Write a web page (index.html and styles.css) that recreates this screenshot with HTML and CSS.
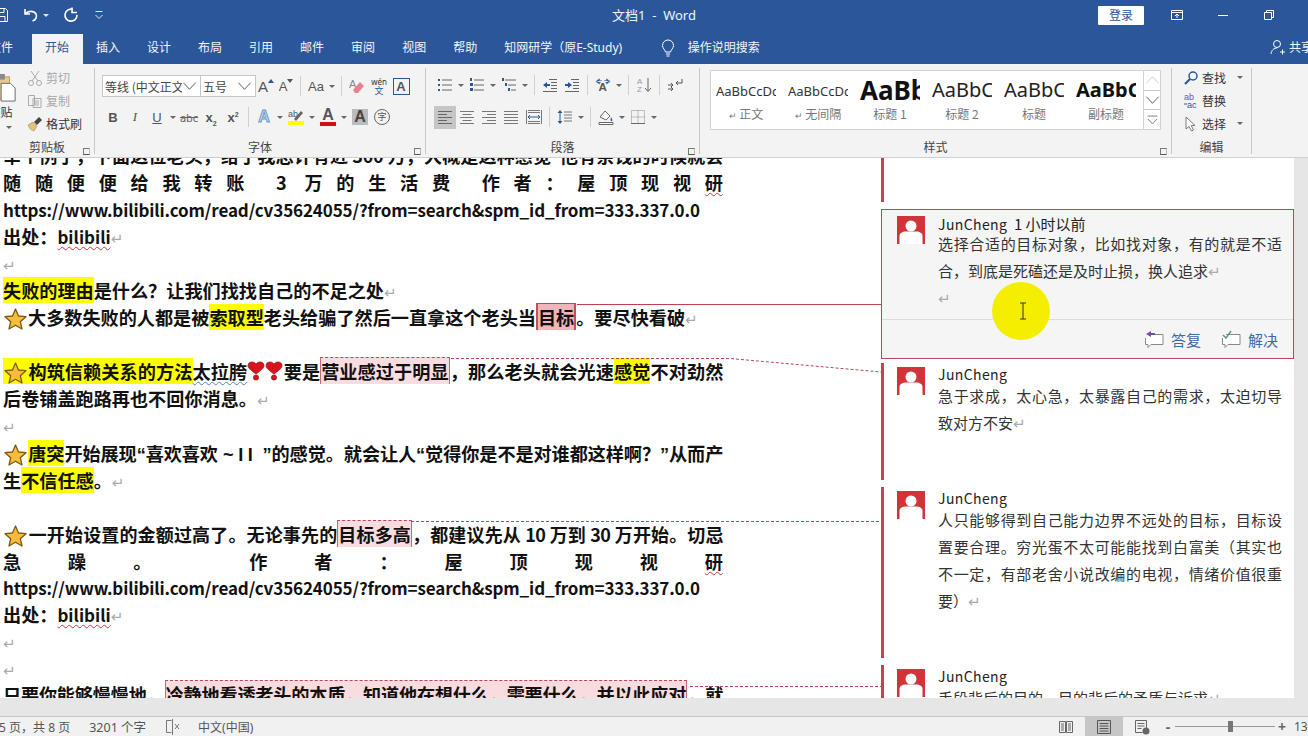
FILE: index.html
```html
<!DOCTYPE html>
<html lang="zh-CN">
<head>
    <meta charset="utf-8">
    <title>文档1 - Word</title>
    <link rel="stylesheet" href="styles.css">
</head>
<body>
<div class="app">
    <!-- title bar -->
    <div class="titlebar">
        <div class="qat">
            <svg class="qat-save" viewBox="0 0 14 14"><path d="M.5.5h11l2 2v11H.5zM3 .5v4h7v-4M3 13.5v-5h8v5" fill="none" stroke="#fff"/></svg>
            <svg class="ic" viewBox="0 0 16 16"><path d="M2 2v5h5M2.500 7C5 3.500 11 3.500 13 7c1.500 3-.5 6-3.500 7" fill="none" stroke="#fff" stroke-width="1.600"/></svg>
            <i class="tri tri-w"></i>
            <svg class="ic redo" viewBox="0 0 16 16"><path d="M10 2.500A6 6 0 1 0 14 8M9 .500v5h5" fill="none" stroke="#fff" stroke-width="1.600"/></svg>
            <svg class="custom" viewBox="0 0 10 10"><path d="M1.500 1.500h7M1.500 5l3.500 3.500L8.500 5" fill="none" stroke="#dfe7f3"/></svg>
        </div>
        <div class="doc-title">文档1 &nbsp;-&nbsp; Word</div>
        <div class="winctl">
            <div class="login">登录</div>
            <div class="winbtn"><svg class="ic" viewBox="0 0 16 16"><path d="M2.500 3.500h11v9h-11zM2.500 5.500h11M8 11V7M6 9l2-2 2 2" fill="none" stroke="#fff"/></svg></div>
            <div class="winbtn"><svg class="ic" viewBox="0 0 16 16"><path d="M3 8.500h10" stroke="#fff"/></svg></div>
            <div class="winbtn"><svg class="ic" viewBox="0 0 16 16"><path d="M3.500 5.500h7v7h-7zM5.500 5.500v-2h7v7h-2" fill="none" stroke="#fff"/></svg></div>
        </div>
    </div>

    <!-- tabs -->
    <div class="tabs">
        <div class="tab tab-file">文件</div>
        <div class="tab active">开始</div>
        <div class="tab">插入</div>
        <div class="tab">设计</div>
        <div class="tab">布局</div>
        <div class="tab">引用</div>
        <div class="tab">邮件</div>
        <div class="tab">审阅</div>
        <div class="tab">视图</div>
        <div class="tab">帮助</div>
        <div class="tab">知网研学（原E-Study)</div>
        <svg class="bulb" viewBox="0 0 16 18"><path d="M5.500 13C5 10.500 2.500 9.500 2.500 6.500a5.500 5.500 0 0 1 11 0c0 3-2.500 4-3 6.500zM6 15h4M6.500 17h3" fill="none" stroke="#fff"/></svg>
        <div class="tab-search">操作说明搜索</div>
        <div class="share">
            <svg class="ic" viewBox="0 0 16 16"><circle cx="7" cy="5" r="3.500" fill="none" stroke="#fff"/><path d="M1 15c.5-4 3-6 6-6M10 13h5M12.500 10.500v5" fill="none" stroke="#fff"/></svg>
            <span>共享</span>
        </div>
    </div>

    <!-- ribbon -->
    <div class="ribbon">
        <section class="group g-clip">
            <div class="g-body clip-body">
                <div class="paste">
                    <svg class="paste-ic" viewBox="0 0 30 32"><path d="M2 4h20v24H2z" fill="#e6c98d" stroke="#b89a62"/><path d="M7 1h10v6H7z" fill="#8a8a8a"/><path d="M13 11h10l5 5v14H13z" fill="#fff" stroke="#666"/></svg>
                    <span>粘贴</span>
                    <i class="tri"></i>
                </div>
                <div class="clip-list">
                    <div class="clip-row off"><svg class="ic" viewBox="0 0 16 16"><path d="M4 1l7 10M12 1L5 11" stroke="#aaa" fill="none"/><circle cx="4" cy="13" r="2.500" fill="none" stroke="#aaa"/><circle cx="12" cy="13" r="2.500" fill="none" stroke="#aaa"/></svg>剪切</div>
                    <div class="clip-row off"><svg class="ic" viewBox="0 0 16 16"><path d="M1.500 2.500h6v10h-6zM6 5.500h8v9H6zM8 8h4M8 10h4M8 12h4" fill="#f3f3f3" stroke="#aaa"/></svg>复制</div>
                    <div class="clip-row"><svg class="ic" viewBox="0 0 16 16"><path d="M1 9l5-3 4 4-3 5c-2 0-5-3-6-6z" fill="#e2c27c" stroke="#a98c50" stroke-width=".6"/><path d="M7 6l5-5 3 3-5 5z" fill="#444"/></svg>格式刷</div>
                </div>
            </div>
            <div class="g-label">剪贴板</div>
            <i class="launch"></i>
        </section>

        <section class="group g-font">
            <div class="g-body">
                <div class="t-row font-top">
                    <div class="combo combo-font"><span>等线 (中文正文)</span><svg class="chev" viewBox="0 0 16 10"><path d="M1.500 1.500L8 8.500l6.500-7" fill="none" stroke="#555"/></svg></div>
                    <div class="combo combo-size"><span>五号</span><svg class="chev" viewBox="0 0 16 10"><path d="M1.500 1.500L8 8.500l6.500-7" fill="none" stroke="#555"/></svg></div>
                    <div class="tool w20"><b class="ga">A</b><svg class="mini" viewBox="0 0 6 4"><path d="M3 0l3 4H0z" fill="#2b579a"/></svg></div>
                    <div class="tool w20"><b class="ga ga-s">A</b><svg class="mini" viewBox="0 0 6 4"><path d="M3 4l3-4H0z" fill="#555"/></svg></div>
                    <i class="sep"></i>
                    <div class="tool d"><span class="aa">Aa</span><i class="tri"></i></div>
                    <i class="sep"></i>
                    <div class="tool"><svg class="ic" viewBox="0 0 16 16"><text x="0" y="10" font-size="11" fill="#888" font-family="Liberation Sans">A</text><path d="M4 12l7-8 4 4-6 7H6z" fill="#e8808f"/></svg></div>
                    <div class="tool wen"><span>wén</span><span>文</span></div>
                    <div class="tool"><span class="a-box">A</span></div>
                </div>
                <div class="t-row font-bot">
                    <div class="tool"><b class="fmt">B</b></div>
                    <div class="tool"><i class="fmt fmt-i">I</i></div>
                    <div class="tool d"><u class="fmt">U</u><i class="tri"></i></div>
                    <div class="tool"><span class="abc">abc</span></div>
                    <div class="tool"><b class="fmt">x<sub>2</sub></b></div>
                    <div class="tool"><b class="fmt">x<sup>2</sup></b></div>
                    <i class="sep"></i>
                    <div class="tool d"><span class="a-glow">A</span><i class="tri"></i></div>
                    <div class="tool d"><svg class="ic" viewBox="0 0 16 16"><text x="0" y="8" font-size="9" fill="#555" font-family="Liberation Sans">ab</text><path d="M6 10l7-8 2 2-7 8z" fill="#666"/><path d="M0 12h16v4H0z" fill="#ff0"/></svg><i class="tri"></i></div>
                    <div class="tool d"><span class="a-color">A</span><i class="tri"></i></div>
                    <div class="tool"><span class="a-gray">A</span></div>
                    <div class="tool"><span class="a-circ">字</span></div>
                </div>
            </div>
            <div class="g-label">字体</div>
            <i class="launch"></i>
        </section>

        <section class="group g-para">
            <div class="g-body">
                <div class="t-row para-top">
                    <div class="tool d"><svg class="ic" viewBox="0 0 16 16"><path d="M5 3h10M5 8h10M5 13h10" stroke="#666"/><path d="M1 2h2v2H1zM1 7h2v2H1zM1 12h2v2H1z" fill="#2b579a"/></svg><i class="tri"></i></div>
                    <div class="tool d"><svg class="ic" viewBox="0 0 16 16"><path d="M5 3h10M5 8h10M5 13h10" stroke="#666"/><path d="M1 1h2v3H1zM1 6h3v3H1zM1 11h3v3H1z" fill="#2b579a"/></svg><i class="tri"></i></div>
                    <div class="tool d"><svg class="ic" viewBox="0 0 16 16"><path d="M4 3h11M7 8h8M10 13h5" stroke="#666"/><path d="M1 1h2v3H1zM4 6h2v3H4zM7 11h2v3H7z" fill="#2b579a"/></svg><i class="tri"></i></div>
                    <i class="sep"></i>
                    <div class="tool"><svg class="ic" viewBox="0 0 16 16"><path d="M7 2.500h8M9 5.500h6M9 8.500h6M9 11.500h6M1 14.500h14" stroke="#666"/><path d="M1 8l4-3v2h3v2H5v2z" fill="#2b579a"/></svg></div>
                    <div class="tool"><svg class="ic" viewBox="0 0 16 16"><path d="M7 2.500h8M9 5.500h6M9 8.500h6M9 11.500h6M1 14.500h14" stroke="#666"/><path d="M8 8L4 5v2H1v2h3v2z" fill="#2b579a"/></svg></div>
                    <i class="sep"></i>
                    <div class="tool d"><svg class="ic" viewBox="0 0 18 16"><text x="4" y="15" font-size="13" font-weight="700" fill="#555" font-family="Liberation Sans">A</text><path d="M1 4l4-3v2h3M17 4l-4-3v2h-3M1 4l4 3V5h2M17 4l-4 3V5h-2" fill="#2b579a" stroke="#2b579a" stroke-width=".5"/></svg><i class="tri"></i></div>
                    <i class="sep"></i>
                    <div class="tool"><svg class="ic" viewBox="0 0 16 16"><text x="1" y="7" font-size="8" fill="#999" font-family="Liberation Sans">A</text><text x="1" y="15" font-size="8" fill="#999" font-family="Liberation Sans">Z</text><path d="M12 1v13M9 11l3 3.500 3-3.500" fill="none" stroke="#666"/></svg></div>
                    <i class="sep"></i>
                    <div class="tool"><svg class="ic" viewBox="0 0 16 16"><path d="M15 2v4H9M11 4L9 6l2 2M1 8h5M4 6l2 2-2 2M1 12h5M4 10l2 2-2 2" fill="none" stroke="#555"/></svg></div>
                </div>
                <div class="t-row para-bot">
                    <div class="tool on"><svg class="ic" viewBox="0 0 16 16"><path d="M1 2.500h14M1 5.500h9M1 8.500h14M1 11.500h9M1 14.500h14" stroke="#666"/></svg></div>
                    <div class="tool"><svg class="ic" viewBox="0 0 16 16"><path d="M1 2.500h14M3.500 5.500h9M1 8.500h14M3.500 11.500h9M1 14.500h14" stroke="#777"/></svg></div>
                    <div class="tool"><svg class="ic" viewBox="0 0 16 16"><path d="M1 2.500h14M6 5.500h9M1 8.500h14M6 11.500h9M1 14.500h14" stroke="#777"/></svg></div>
                    <div class="tool"><svg class="ic" viewBox="0 0 16 16"><path d="M1 2.500h14M1 5.500h14M1 8.500h14M1 11.500h14M1 14.500h14" stroke="#777"/></svg></div>
                    <div class="tool dist"><svg class="ic" viewBox="0 0 16 16"><path d="M.5 1v14M15.500 1v14M2 1.500h12M2 3.500h12M2 12.500h12M2 14.500h12" stroke="#777"/><path d="M2 8h12M4 6L2 8l2 2M12 6l2 2-2 2" fill="none" stroke="#2b579a"/></svg></div>
                    <i class="sep"></i>
                    <div class="tool d"><svg class="ic" viewBox="0 0 16 16"><path d="M7 3h8M7 6h8M7 9h8M7 12h8" stroke="#777"/><path d="M3 1l2.500 3h-5zM3 15L.5 12h5z" fill="#2b579a"/><path d="M3 3v10" stroke="#2b579a"/></svg><i class="tri"></i></div>
                    <i class="sep"></i>
                    <div class="tool d"><svg class="ic" viewBox="0 0 16 16"><path d="M2 8l5-6 5 5-4 4z" fill="#fff" stroke="#666"/><path d="M13 8c1 2 2 3 1 4s-2-1-1-4z" fill="#2b579a"/><path d="M1 13.500h14v2H1z" fill="#fff" stroke="#666"/></svg><i class="tri"></i></div>
                    <div class="tool d"><svg class="ic" viewBox="0 0 16 16"><path d="M1.500 1.500h13v13h-13zM8 1.500v13M1.500 8h13" fill="none" stroke="#888" stroke-dasharray="1 1"/><path d="M1 14.500h14" stroke="#666"/></svg><i class="tri"></i></div>
                </div>
            </div>
            <div class="g-label">段落</div>
            <i class="launch"></i>
        </section>

        <section class="group g-style">
            <div class="style-box">
                <div class="style-item"><div class="pv">AaBbCcDd</div><div class="lb"><em>↵</em> 正文</div></div>
                <div class="style-item"><div class="pv">AaBbCcDd</div><div class="lb"><em>↵</em> 无间隔</div></div>
                <div class="style-item"><div class="pv pv-h1">AaBbC</div><div class="lb">标题 1</div></div>
                <div class="style-item"><div class="pv pv-h2">AaBbCc</div><div class="lb">标题 2</div></div>
                <div class="style-item"><div class="pv pv-h2">AaBbCc</div><div class="lb">标题</div></div>
                <div class="style-item style-last"><div class="pv pv-h3">AaBbCc</div><div class="lb">副标题</div></div>
                <div class="style-scroll">
                    <div><svg class="chev" viewBox="0 0 16 10"><path d="M1.500 8.500L8 1.500l6.500 7" fill="none" stroke="#ccc"/></svg></div>
                    <div><svg class="chev" viewBox="0 0 16 10"><path d="M1.500 1.500L8 8.500l6.500-7" fill="none" stroke="#555"/></svg></div>
                    <div><svg class="chev" viewBox="0 0 16 14"><path d="M1 1.500h14M1.500 5.500L8 12.500l6.500-7" fill="none" stroke="#555"/></svg></div>
                </div>
            </div>
            <div class="g-label">样式</div>
            <i class="launch"></i>
        </section>

        <section class="group g-edit">
            <div class="g-body edit-list">
                <div class="edit-row"><svg class="ic" viewBox="0 0 16 16"><circle cx="10" cy="6" r="4" fill="none" stroke="#2b579a" stroke-width="1.500"/><path d="M7 9l-5 5" stroke="#2b579a" stroke-width="2.200"/></svg>查找<i class="tri"></i></div>
                <div class="edit-row"><svg class="ic" viewBox="0 0 16 16"><text x="1" y="7" font-size="9" fill="#7b4fa0" font-family="Liberation Sans">ab</text><text x="4" y="15" font-size="9" fill="#2b579a" font-family="Liberation Sans">ac</text><path d="M1 11h3" stroke="#2b579a"/></svg>替换</div>
                <div class="edit-row"><svg class="ic" viewBox="0 0 16 16"><path d="M3 1v12l3-2.500L8.500 15l2-1-2.300-4.500H12z" fill="#fff" stroke="#777"/></svg>选择<i class="tri"></i></div>
            </div>
            <div class="g-label">编辑</div>
        </section>
    </div>

    <!-- document + markup area -->
    <div class="main">
        <div class="sheet">
            <div class="doc">
                <p class="ln fit squeeze">举个例子，下面这位老头，给了我总计有近 300 万，大概是这种感觉<span class="q">"</span>他有余钱的时候就会</p>
                <p class="ln fit">随随便便给我转账 3 万的生活费 作者：屋顶现视<span class="wave">研</span></p>
                <p class="ln url">https://www.bilibili.com/read/cv35624055/?from=search&amp;spm_id_from=333.337.0.0</p>
                <p class="ln">出处：<span class="wave lat">bilibili</span><em class="para">↵</em></p>
                <p class="ln"><em class="para">↵</em></p>
                <p class="ln"><mark>失败的理由</mark>是什么？让我们找找自己的不足之处<em class="para">↵</em></p>
                <p class="ln"><svg class="star" viewBox="0 0 24 24"><use href="#star"/></svg>大多数失败的人都是被<mark>索取型</mark>老头给骗了然后一直拿这个老头当<span class="cmt cmt-on">目标</span>。要尽快看破<em class="para">↵</em></p>
                <p class="ln"></p>
                <p class="ln fit squeeze"><mark><svg class="star" viewBox="0 0 24 24"><use href="#star"/></svg>构筑信赖关系的方法</mark><span class="wave-b">太拉胯</span><svg class="heart" viewBox="0 0 18 20"><use href="#heart"/></svg><svg class="heart" viewBox="0 0 18 20"><use href="#heart"/></svg>要是<span class="cmt">营业感过于明显</span>，那么老头就会光速<mark>感觉</mark>不对劲然</p>
                <p class="ln">后卷铺盖跑路再也不回你消息。<em class="para">↵</em></p>
                <p class="ln"><em class="para">↵</em></p>
                <p class="ln fit squeeze"><svg class="star" viewBox="0 0 24 24"><use href="#star"/></svg><mark>唐突</mark>开始展现<span class="q">“</span>喜欢喜欢<span class="q"> ~ I I  ”</span>的感觉。就会让人<span class="q">“</span>觉得你是不是对谁都这样啊？<span class="q">”</span>从而产</p>
                <p class="ln">生<mark>不信任感</mark>。<em class="para">↵</em></p>
                <p class="ln"></p>
                <p class="ln fit squeeze-more"><svg class="star" viewBox="0 0 24 24"><use href="#star"/></svg>一开始设置的金额过高了。无论事先的<span class="cmt">目标多高</span>，都建议先从 10 万到 30 万开始。切忌</p>
                <p class="ln fit">急躁。 作者：屋顶现视<span class="wave">研</span></p>
                <p class="ln ln-t url">https://www.bilibili.com/read/cv35624055/?from=search&amp;spm_id_from=333.337.0.0</p>
                <p class="ln ln-t">出处：<span class="wave lat">bilibili</span><em class="para">↵</em></p>
                <p class="ln ln-t"><em class="para">↵</em></p>
                <p class="ln ln-t"><em class="para">↵</em></p>
                <p class="ln ln-t fit squeeze">只要你能够慢慢地，<span class="cmt">冷静地看透老头的本质，知道他在想什么，需要什么，并以此应对</span>，就</p>
            </div>

            <div class="markup">
                <div class="comment c-prev"></div>
                <div class="comment c-active">
                    <div class="c-main">
                        <svg class="avatar" viewBox="0 0 28 28"><use href="#avatar"/></svg>
                        <div class="c-text">
                            <div class="c-name">JunCheng <span>1 小时以前</span></div>
                            <div class="c-body">选择合适的目标对象，比如找对象，有的就是不适合，到底是死磕还是及时止损，换人追求<em class="para">↵</em><br><em class="para">↵</em></div>
                        </div>
                    </div>
                    <div class="c-foot">
                        <svg class="foot-ic" viewBox="0 0 20 18"><path d="M5 4.500h14v10H7l-3 3v-3H1.500V8" fill="#fff" stroke="#888"/><path d="M7 1L2 4l5 3V5h4V3H7z" fill="#7a4ea8"/></svg>
                        <span>答复</span>
                        <svg class="foot-ic" viewBox="0 0 20 18"><path d="M5 4.500h14v10H7l-3 3v-3H1.500V8" fill="#fff" stroke="#888"/><path d="M2 5l3 3 5-7" fill="none" stroke="#5c9e7a" stroke-width="1.500"/></svg>
                        <span>解决</span>
                    </div>
                </div>
                <div class="comment c-2">
                    <div class="c-main">
                        <svg class="avatar" viewBox="0 0 28 28"><use href="#avatar"/></svg>
                        <div class="c-text">
                            <div class="c-name">JunCheng</div>
                            <div class="c-body">急于求成，太心急，太暴露自己的需求，太迫切导致对方不安<em class="para">↵</em></div>
                        </div>
                    </div>
                </div>
                <div class="comment c-3">
                    <div class="c-main">
                        <svg class="avatar" viewBox="0 0 28 28"><use href="#avatar"/></svg>
                        <div class="c-text">
                            <div class="c-name">JunCheng</div>
                            <div class="c-body">人只能够得到自己能力边界不远处的目标，目标设置要合理。穷光蛋不太可能能找到白富美（其实也不一定，有部老舍小说改编的电视，情绪价值很重要）<em class="para">↵</em></div>
                        </div>
                    </div>
                </div>
                <div class="comment c-4">
                    <div class="c-main">
                        <svg class="avatar" viewBox="0 0 28 28"><use href="#avatar"/></svg>
                        <div class="c-text">
                            <div class="c-name">JunCheng</div>
                            <div class="c-body">手段背后的目的，目的背后的矛盾与诉求<em class="para">↵</em></div>
                        </div>
                    </div>
                </div>
            </div>
        </div>

        <!-- comment connector lines, over the page -->
        <svg class="links" viewBox="0 0 1308 540">
            <path d="M577 146.500H881" stroke="#c0404f" fill="none"/>
            <path d="M451 200.500H730L881 214M411 363.500H881M690 528.500H881" stroke="#b5485a" stroke-dasharray="3 2" fill="none"/>
        </svg>

        <div class="spot"><svg viewBox="0 0 10 18"><path d="M2 1h6M2 17h6M5 1v16" fill="none" stroke="#333"/></svg></div>
    </div>

    <!-- status bar -->
    <div class="status">
        <span class="st-page">第 5 页，共 8 页</span>
        <span class="st-words">3201 个字</span>
        <svg class="st-book" viewBox="0 0 16 16"><path d="M7.500 1.500h-5v12h5M8.500 0v16" fill="none" stroke="#777"/><path d="M11 5l4 5M15 5l-4 5" stroke="#777"/></svg>
        <span class="st-lang">中文(中国)</span>
        <div class="st-right">
            <div class="view"><svg class="ic" viewBox="0 0 16 16"><path d="M1.500 2.500h6v11h-6zM8.500 2.500h6v11h-6zM3 5h3M3 7h3M3 9h3M3 11h3M10 5h3M10 7h3M10 9h3M10 11h3" fill="none" stroke="#666"/></svg></div>
            <div class="view on"><svg class="ic" viewBox="0 0 16 16"><path d="M1.500 1.500h13v13h-13zM3.500 4.500h9M3.500 7h9M3.500 9.500h9M3.500 12h9" fill="none" stroke="#555"/></svg></div>
            <div class="view"><svg class="ic" viewBox="0 0 16 16"><path d="M1.500 1.500h11v9M1.500 1.500v12h7M3.500 4.500h7M3.500 7h7M3.500 9.500h4" fill="none" stroke="#666"/><circle cx="12" cy="12" r="3.500" fill="#666"/></svg></div>
            <div class="zoom">
                <span class="z-sign">-</span>
                <div class="z-track"><i></i></div>
                <span class="z-sign">+</span>
                <span class="z-val">130%</span>
            </div>
        </div>
    </div>
</div>

<!-- shared drawings -->
<svg class="defs" aria-hidden="true">
    <symbol id="star" viewBox="0 0 24 24"><path d="M12 2l3 7 7.500.7-5.700 5 1.700 7.300L12 18.200 5.500 22l1.700-7.300-5.700-5L9 9z" fill="#f8bb3c" stroke="#7a5a12" stroke-width="1.300" stroke-linejoin="round"/></symbol>
    <symbol id="heart" viewBox="0 0 18 20"><path d="M9 13C5 10 1 7.500 1 4.500 1 2 3 1 5 1c2 0 3.300 1 4 2 .7-1 2-2 4-2 2 0 4 1 4 3.500C17 7.500 13 10 9 13z" fill="#d8141c" stroke="#8c1015" stroke-width=".7"/><circle cx="9" cy="16.500" r="2.600" fill="#d8141c" stroke="#8c1015" stroke-width=".7"/></symbol>
    <symbol id="avatar" viewBox="0 0 28 28"><path d="M0 0h28v28H0z" fill="#d13438"/><circle cx="14" cy="10" r="5.500" fill="#fff"/><path d="M2.500 28V20c0-3 3-4.500 6-4.500h11c3 0 6 1.500 6 4.500v8z" fill="#fff"/></symbol>
</svg>
</body>
</html>
```

FILE: styles.css
```css
* {
    box-sizing: border-box;
}

html, body {
    margin: 0;
    height: 100%;
    overflow: hidden;
}

body {
    font-family: "Noto Sans", "Noto Sans CJK SC", sans-serif;
    font-size: 12px;
    color: #444;
}

.app {
    width: 1308px;
    height: 736px;
    display: flex;
    flex-direction: column;
    overflow: hidden;
    background: #e6e6e6;
}

.ic {
    width: 16px;
    height: 16px;
    flex: none;
}

.tri {
    display: block;
    width: 0;
    height: 0;
    flex: none;
    border-left: 3px solid transparent;
    border-right: 3px solid transparent;
    border-top: 3px solid #666;
}

.tri-w {
    border-top-color: #dfe7f3;
}

.defs {
    position: absolute;
    width: 0;
    height: 0;
}

/* title bar */
.titlebar {
    height: 30px;
    flex: none;
    background: #2b579a;
    display: grid;
    grid-template-columns: 1fr auto 1fr;
    align-items: center;
    color: #fff;
}

.qat {
    display: flex;
    align-items: center;
    margin-left: -6px;
}

.qat-save {
    width: 14px;
    height: 14px;
    margin-right: 15px;
}

.qat .tri {
    margin-left: 4px;
}

.redo {
    margin-left: 14px;
}

.custom {
    width: 10px;
    height: 10px;
    margin-left: 15px;
}

.doc-title {
    font-size: 13px;
    color: #f0f3f8;
    margin-bottom: 2px;
}

.winctl {
    display: flex;
    align-items: center;
    justify-content: flex-end;
    margin-right: 16px;
}

.login {
    width: 46px;
    height: 19px;
    line-height: 19px;
    margin-right: 10px;
    text-align: center;
    background: #fff;
    color: #2b579a;
    border-radius: 1px;
}

.winbtn {
    width: 46px;
    display: flex;
    justify-content: center;
}

/* tabs */
.tabs {
    height: 34px;
    flex: none;
    background: #2b579a;
    display: flex;
    align-items: flex-end;
    color: #f3f5f9;
}

.tab {
    height: 30px;
    line-height: 28px;
    padding: 0 13.500px;
    flex: none;
}

.tab-file {
    margin-left: -24.500px;
    margin-right: 5px;
}

.tab.active {
    background: #f3f3f3;
    color: #2b579a;
}

.bulb {
    width: 16px;
    height: 18px;
    margin: 0 12px 7px 24px;
    flex: none;
}

.tab-search {
    height: 30px;
    line-height: 28px;
}

.share {
    margin-left: auto;
    margin-right: -8px;
    margin-bottom: 3px;
    height: 29px;
    width: 46px;
    display: flex;
    align-items: center;
    gap: 3px;
    flex: none;
    white-space: nowrap;
}

/* ribbon */
.ribbon {
    height: 94px;
    flex: none;
    background: #f3f3f3;
    border-bottom: 1px solid #d0d0d0;
    display: flex;
}

.group {
    position: relative;
    flex: none;
    height: 86px;
    border-right: 1px solid #c8c8c8;
    margin: 4px 0 0;
}

.g-body {
    height: 71px;
}

.g-label {
    position: absolute;
    left: 0;
    right: 0;
    top: 71px;
    text-align: center;
    font-family: "Noto Sans CJK SC", sans-serif;
    font-size: 12px;
    line-height: 16px;
    color: #444;
}

.launch {
    position: absolute;
    right: 4px;
    top: 80px;
    width: 7px;
    height: 7px;
    border-left: 1px solid #777;
    border-top: 1px solid #777;
    border-right: 1px solid #bbb;
    border-bottom: 1px solid #555;
}

.g-clip {
    width: 95px;
}

.g-font {
    width: 331px;
    padding-left: 7px;
}

.g-para {
    width: 274px;
    padding-left: 8px;
}

.g-style {
    width: 472px;
    padding-left: 10px;
}

.g-edit {
    width: 80px;
    padding-left: 11px;
}

.t-row {
    display: flex;
    align-items: center;
    height: 24px;
}

.font-top {
    margin-top: 6px;
}

.font-bot {
    margin-top: 7px;
}

.para-top {
    margin-top: 5px;
}

.para-bot {
    margin-top: 8px;
}

.tool {
    position: relative;
    width: 22px;
    height: 23px;
    flex: none;
    display: flex;
    align-items: center;
    justify-content: center;
}

.w20 {
    width: 20px;
}

.tool.d {
    width: 32px;
    justify-content: flex-start;
    padding-left: 3px;
    gap: 5px;
}

.tool.on {
    background: #c6c6c6;
}

.dist {
    margin-left: 1px;
}

.sep {
    display: block;
    width: 1px;
    height: 20px;
    margin: 0 4px;
    background: #d0d0d0;
    flex: none;
}

/* clipboard */
.clip-body {
    display: flex;
}

.paste {
    width: 27px;
    margin-left: -13px;
    margin-right: 13px;
    padding-top: 5px;
    display: flex;
    flex-direction: column;
    align-items: center;
    flex: none;
}

.paste-ic {
    width: 28px;
    height: 30px;
    flex: none;
    align-self: flex-start;
    margin-left: 2px;
}

.paste span {
    font-family: "Noto Sans CJK SC", sans-serif;
    line-height: 16px;
    margin-top: 1px;
    white-space: nowrap;
    color: #333;
}

.paste .tri {
    margin-top: 6px;
    margin-left: 16px;
}

.clip-list {
    margin-top: -2px;
}

.clip-row {
    height: 23px;
    display: flex;
    align-items: center;
    gap: 3px;
    color: #333;
    white-space: nowrap;
}

.clip-row.off {
    color: #a8a8a8;
}

/* font group */
.combo {
    height: 22px;
    background: #fff;
    border: 1px solid #c6c6c6;
    display: flex;
    align-items: center;
    justify-content: space-between;
    padding: 0 3px 0 2px;
    flex: none;
    overflow: hidden;
}

.combo span {
    white-space: nowrap;
    overflow: hidden;
    font-family: "Noto Sans CJK SC", sans-serif;
    font-size: 12px;
}

.combo-font {
    width: 99px;
}

.combo-size {
    width: 56px;
    margin-left: -1px;
}

.combo-font span {
    width: 78px;
}

.chev {
    width: 15px;
    height: 10px;
    flex: none;
}

.ga {
    font-family: "Liberation Sans", sans-serif;
    font-weight: 400;
    font-size: 15px;
    color: #555;
}

.ga-s {
    font-size: 13px;
}

.mini {
    width: 6px;
    height: 4px;
    margin-bottom: 10px;
}

.aa {
    font-size: 13px;
    width: 16px;
    color: #555;
    font-family: "Liberation Sans", sans-serif;
    white-space: nowrap;
}

.wen {
    flex-direction: column;
    line-height: 9px;
    font-size: 8px;
    color: #333;
}

.wen span + span {
    color: #2b579a;
    font-size: 9px;
    font-family: "Noto Sans CJK SC", sans-serif;
}

.a-box {
    width: 17px;
    height: 17px;
    text-align: center;
    border: 1px solid #2b579a;
    font: 700 13px/15px "Liberation Sans", sans-serif;
    color: #555;
}

.fmt {
    font-family: "Liberation Sans", sans-serif;
    font-size: 13px;
    width: 16px;
    text-align: center;
    color: #555;
}

.fmt-i {
    font-family: "Liberation Serif", serif;
}

.fmt sub, .fmt sup {
    font-size: 7px;
    line-height: 0;
}

.abc {
    font-size: 11px;
    color: #666;
    text-decoration: line-through;
}

.a-glow, .a-color, .a-gray {
    width: 16px;
    text-align: center;
    font: 700 16px/16px "Liberation Sans", sans-serif;
}

.a-glow {
    color: #cfe0f3;
    -webkit-text-stroke: 1px #6f96c8;
}

.a-color {
    color: #555;
    border-bottom: 4px solid #d01010;
    line-height: 14px;
}

.a-gray {
    color: #444;
    background: #bcbcbc;
}

.a-circ {
    width: 16px;
    height: 16px;
    border: 1px solid #666;
    border-radius: 50%;
    font: 9px/14px "Noto Sans CJK SC", sans-serif;
    text-align: center;
    color: #555;
}

/* styles gallery */
.style-box {
    width: 451px;
    height: 60px;
    margin-top: 2px;
    background: #fff;
    border: 1px solid #d2d2d2;
    display: flex;
    padding-left: 5px;
}

.style-item {
    width: 72px;
    flex: none;
}

.style-last {
    width: 66px;
}

.pv {
    width: 60px;
    height: 35px;
    line-height: 40px;
    overflow: hidden;
    white-space: nowrap;
    font-size: 13px;
    color: #333;
    font-family: "Noto Sans", sans-serif;
}

.pv-h1 {
    font-size: 26px;
    font-weight: 700;
    color: #111;
    line-height: 38px;
}

.pv-h2 {
    font-size: 20px;
    color: #222;
    line-height: 38px;
}

.pv-h3 {
    font-size: 20px;
    font-weight: 700;
    color: #111;
    line-height: 38px;
}

.lb {
    width: 60px;
    text-align: center;
    font-size: 12px;
    line-height: 16px;
    color: #777;
    font-family: "Noto Sans CJK SC", sans-serif;
}

.lb em {
    font-style: normal;
    font-size: 9px;
}

.style-scroll {
    width: 17px;
    margin-left: auto;
    border-left: 1px solid #d2d2d2;
    flex: none;
    display: flex;
    flex-direction: column;
}

.style-scroll div {
    flex: 1;
    display: flex;
    align-items: center;
    justify-content: center;
    border-bottom: 1px solid #c8c8c8;
}

.style-scroll div:last-child {
    border-bottom: 0;
}

/* edit group */
.edit-list {
    margin-top: -2px;
}

.edit-row {
    height: 23px;
    display: flex;
    align-items: center;
    gap: 3px;
    color: #333;
    white-space: nowrap;
    font-family: "Noto Sans CJK SC", sans-serif;
}

.edit-row .tri {
    margin-left: 8px;
}

/* page */
.main {
    position: relative;
    height: 540px;
    flex: none;
    overflow: hidden;
}

.sheet {
    width: 1294px;
    height: 540px;
    background: #fff;
    display: flex;
    overflow: hidden;
}

.doc {
    width: 881px;
    flex: none;
    margin-top: -16px;
    padding-left: 3px;
    font-family: "Noto Sans CJK SC", sans-serif;
    font-size: 18.150px;
    font-weight: 700;
    color: #111;
}

.ln {
    width: 720px;
    height: 27.050px;
    line-height: 27.050px;
    margin: 0;
}

.ln-t {
    height: 26.600px;
    line-height: 26.600px;
}

.fit {
    text-align: justify;
    text-align-last: justify;
}

.squeeze {
    letter-spacing: -.3px;
}

.squeeze-more {
    font-size: 18px;
    letter-spacing: -.5px;
}

.url {
    font-size: 17px;
    letter-spacing: -.13px;
    white-space: nowrap;
}

.lat {
    font-size: 17px;
}

/* narrow quotes, as the latin font sets them */
.q {
    font-family: "Liberation Sans", sans-serif;
    white-space: pre;
}

mark {
    background: #ffff00;
    color: inherit;
}

.para {
    font-style: normal;
    font-weight: 400;
    font-size: 15px;
    color: #aaa;
    font-family: "DejaVu Sans", sans-serif;
}

.wave {
    text-decoration: underline wavy #d0333f 1px;
    text-underline-offset: 2px;
}

.wave-b {
    text-decoration: underline wavy #4a7fc4 1px;
    text-underline-offset: 2px;
}

.cmt {
    background: #f9dcdf;
    border-left: 1px solid #c56a76;
    border-right: 1px solid #c56a76;
    border-top: 1px dashed #b5485a;
}

.cmt-on {
    background: #eeb5ba;
    border-left: 2px solid #c2505c;
    border-right: 2px solid #c2505c;
    border-top: 1px solid #b5485a;
}

.star {
    width: 25px;
    height: 24px;
    vertical-align: -6px;
}

.heart {
    width: 18px;
    height: 20px;
    vertical-align: -2px;
}

/* comments */
.markup {
    width: 413px;
    flex: none;
    font-family: "Noto Sans CJK SC", sans-serif;
    font-size: 15px;
    color: #333;
}

.comment {
    border-left: 3px solid #c5434f;
    padding-top: 3px;
    margin-bottom: 7px;
}

.c-prev {
    height: 44px;
}

.c-active {
    height: 150px;
    border: 1px solid #b5485a;
    background: #f5f5f5;
    padding-top: 5px;
    margin-bottom: 4px;
}

.c-2 {
    height: 117px;
}

.c-3 {
    height: 171px;
}

.c-4 {
    height: 80px;
}

.c-main {
    display: flex;
    padding-left: 13px;
    height: 104px;
}

.c-active .c-main {
    padding-left: 15px;
}

.avatar {
    width: 28px;
    height: 28px;
    flex: none;
    margin-top: 1px;
}

.c-text {
    width: 344px;
    margin-left: 13px;
    flex: none;
}

.c-name {
    height: 17px;
    line-height: 17px;
    font-size: 14px;
    letter-spacing: .4px;
    color: #222;
}

.c-name span {
    font-size: 15px;
    letter-spacing: 0;
    margin-left: 3px;
}

.c-body {
    line-height: 27px;
    margin-top: -1px;
    text-align: justify;
}

.c-active .c-body {
    line-height: 26.500px;
}

.c-foot {
    height: 39px;
    border-top: 1px solid #dcdcdc;
    display: flex;
    align-items: center;
    justify-content: flex-end;
    padding-right: 15px;
    color: #3c6aa6;
}

.foot-ic {
    width: 20px;
    height: 18px;
    margin-left: 20px;
    margin-right: 7px;
}

/* connector lines and the presenter's pointer sit over the page */
.links {
    position: absolute;
    left: 0;
    top: 0;
    width: 1308px;
    height: 540px;
    pointer-events: none;
}

.spot {
    position: absolute;
    left: 992px;
    top: 124px;
    width: 58px;
    height: 58px;
    border-radius: 50%;
    background: #f4ef00;
    display: flex;
    align-items: center;
    justify-content: center;
}

.spot svg {
    width: 10px;
    height: 18px;
    margin-left: 3px;
}

/* status bar */
.status {
    flex: 1;
    min-height: 0;
    margin-top: 18px;
    background: #f1f1f1;
    border-top: 1px solid #c6c6c6;
    display: flex;
    align-items: center;
    color: #555;
}

.st-page {
    margin-left: -16px;
    white-space: nowrap;
}

.st-words {
    margin-left: 19px;
    font-size: 12.500px;
    white-space: nowrap;
}

.st-book {
    width: 16px;
    height: 16px;
    margin-left: 18px;
}

.st-lang {
    margin-left: 18px;
    white-space: nowrap;
}

.st-right {
    margin-left: auto;
    display: flex;
    align-items: center;
    height: 100%;
    margin-right: -20px;
    flex: none;
}

.view {
    width: 38px;
    height: 100%;
    display: flex;
    align-items: center;
    justify-content: center;
}

.view.on {
    background: #c6c6c6;
}

.zoom {
    display: flex;
    align-items: center;
}

.z-sign {
    width: 14px;
    text-align: center;
    font-size: 14px;
    font-weight: 700;
    color: #666;
}

.z-track {
    position: relative;
    width: 100px;
    height: 1px;
    background: #999;
}

.z-track i {
    position: absolute;
    left: 53px;
    top: -5px;
    width: 5px;
    height: 11px;
    background: #777;
}

.z-val {
    margin-left: 5px;
    width: 34px;
    white-space: nowrap;
}
```
